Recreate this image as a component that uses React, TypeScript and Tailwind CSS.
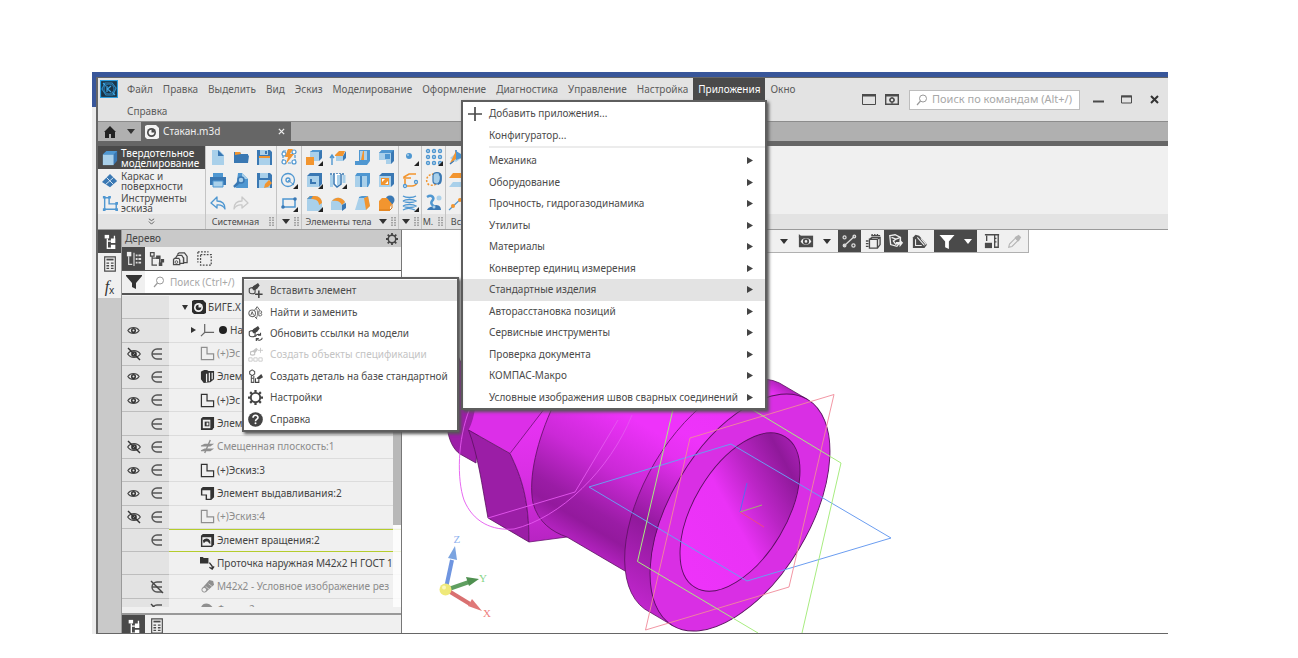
import React from "react";

type IconProps = { children: React.ReactNode; className?: string; box?: string };

function Icon({ children, className = "h-[18px] w-[18px]", box = "0 0 18 18" }: IconProps) {
  return (
    <svg viewBox={box} className={`shrink-0 ${className}`} fill="none" aria-hidden="true">
      {children}
    </svg>
  );
}

const L = "#a9d0ea";
const M = "#4f97d1";
const D = "#3a78b3";
const O = "#f2952f";
const G = "#4b4b4b";

const corner = <path d="M18 13v5h-5z" fill="#222" />;

const icons = {
  newFile: (
    <Icon>
      <path d="M3 2h7l5 5v10H3z" fill={L} />
      <path d="M9 2l6 6H9z" fill={D} />
    </Icon>
  ),
  open: (
    <Icon>
      <path d="M2 4h6l1 2h7v9H2z" fill={D} />
      <path d="M3 4h5l1 2-6 1z" fill={O} />
      <path d="M2 15L4 7.500h13L16 15z" fill={D} />
    </Icon>
  ),
  save: (
    <Icon>
      <path d="M2 2h13l2 2v13H2z" fill={D} />
      <path d="M5 2h8v5H5z" fill={L} />
      <path d="M10 3h2v3h-2z" fill={D} />
      <path d="M4 9h11v8H4z" fill={L} />
      <path d="M4 8h11v2H4z" fill={O} />
    </Icon>
  ),
  print: (
    <Icon>
      <path d="M4 2h10v4H4z" fill={M} />
      <path d="M1 6h16v8H1z" fill={D} />
      <path d="M4 10h10v6H4z" fill={L} stroke={M} />
    </Icon>
  ),
  preview: (
    <Icon>
      <path d="M6 2h4l6 6v9H4z" fill={M} />
      <path d="M10 2l6 6h-6z" fill={L} />
      <circle cx="9" cy="9" r="3" fill={L} stroke={D} strokeWidth="1.500" />
      <path d="M7 11l-5 5" stroke={D} strokeWidth="2.500" />
    </Icon>
  ),
  saveAs: (
    <Icon>
      <path d="M2 2h13l2 2v13H2z" fill={D} />
      <path d="M5 2h8v5H5z" fill={L} />
      <path d="M4 9h11v8H4z" fill={L} />
      <path d="M9 17l1-4 4-4 3 3-4 4z" fill={O} />
    </Icon>
  ),
  undo: (
    <Icon>
      <path d="M8 3L2 9l6 5v-3c4-.5 6 .5 8 4 0-5-3-8-8-8z" stroke={M} strokeWidth="1.300" strokeLinejoin="round" />
    </Icon>
  ),
  redo: (
    <Icon>
      <path d="M10 3l6 6-6 5v-3c-4-.5-6 .5-8 4 0-5 3-8 8-8z" stroke="#c9c9c9" strokeWidth="1.300" strokeLinejoin="round" />
    </Icon>
  ),
  rebuild: (
    <Icon>
      <path d="M3 3h6M3 3v11M8 15h7V5" stroke={M} strokeWidth="1.200" strokeDasharray="3 1" />
      <g fill="#fff" stroke={M} strokeWidth="1.200">
        <circle cx="4" cy="14" r="2" />
        <circle cx="14" cy="4" r="2" />
        <circle cx="14" cy="14" r="2" />
        <circle cx="4" cy="6" r="2" />
      </g>
      <path d="M8 1h5l-3 5h4l-8 10 2-7H5z" fill={O} />
    </Icon>
  ),
  circle: (
    <Icon>
      <circle cx="8" cy="9" r="6.500" stroke={M} strokeWidth="1.300" />
      <circle cx="8" cy="9" r="2" stroke={M} strokeWidth="1.300" />
      <path d="M8 9l6 5" stroke={M} />
      {corner}
    </Icon>
  ),
  rect: (
    <Icon>
      <path d="M3 5h12v8H3z" stroke={M} strokeWidth="1.500" />
      <g fill={D}>
        <circle cx="3" cy="13" r="1.800" />
        <circle cx="15" cy="5" r="1.800" />
      </g>
      {corner}
    </Icon>
  ),
  extrude: (
    <Icon>
      <path d="M5 4l3-2h9v8l-3 3H5z" fill={D} />
      <path d="M5 4h9v9H5z" fill={L} />
      <path d="M5 4l3-2h9l-3 2z" fill={M} />
      <path d="M1 9h8v8H1z" fill={O} />
      {corner}
    </Icon>
  ),
  push: (
    <Icon>
      <path d="M3 17V8M1 10l2-3 2 3" stroke={M} strokeWidth="1.400" />
      <path d="M6 7l4-4h6l-2 5H6z" fill={O} />
      <path d="M7 8h7v5H7z" fill={L} />
      <path d="M14 8l3-5v7l-3 3z" fill={D} />
    </Icon>
  ),
  rib: (
    <Icon>
      <path d="M6 2h11v10l-3 3H6z" fill={M} />
      <path d="M7 3h7v9H7z" fill={L} />
      <path d="M2 13h12l3-3v3l-3 4H2z" fill={M} />
      <path d="M10 3h1v9H8z" fill={O} />
    </Icon>
  ),
  cutBox: (
    <Icon>
      <path d="M2 5l3-3h12v11l-3 3h-4v-4H2z" fill={D} />
      <path d="M2 5h12v11H9v-4H2z" fill={L} />
      <path d="M5 2h12l-3 3H2z" fill={M} />
      <path d="M8 6h5v5H8z" fill={M} />
    </Icon>
  ),
  boxCut: (
    <Icon>
      <path d="M2 5l3-3h12v11l-3 3H2z" fill={D} />
      <path d="M2 5h12v11H2z" fill={L} />
      <path d="M5 8h6v5H5z" fill={D} />
      <path d="M7 8h4v3H7z" fill={L} />
      {corner}
    </Icon>
  ),
  hole: (
    <Icon>
      <path d="M1 3h15" stroke={D} strokeWidth="1.500" strokeDasharray="2 1" />
      <path d="M2.500 4v12M15 4v8" stroke={L} strokeWidth="3" />
      <path d="M5 3v10l3 3 4-3V3" stroke={D} strokeWidth="1.500" fill="#fff" />
      <path d="M8 4h3v9l-3 2z" fill={L} />
      {corner}
    </Icon>
  ),
  shell: (
    <Icon>
      <path d="M2 5l2-3h13v10l-2 4H2z" fill={M} />
      <path d="M2 5h5v11H2zM9 5h5v11H9z" fill={L} />
      <path d="M8 5v11" stroke={D} />
    </Icon>
  ),
  window: (
    <Icon>
      <path d="M2 5l3-3h12v11l-3 3H2z" fill={D} />
      <path d="M2 5h12v11H2z" fill={L} />
      <path d="M4 7h8v7H4z" fill={O} />
      <path d="M5 8h3l-3 3zM11 13H8l3-3z" fill="#fff" />
    </Icon>
  ),
  fillet: (
    <Icon>
      <path d="M2 5l3-3h5c4 0 7 3 7 7v5l-3 3H2z" fill={L} />
      <path d="M5 2h5c4 0 7 3 7 7l-3 2c0-4-3-6-8-6H2z" fill={O} />
      <path d="M2 5l3-3h3L6 5z" fill={M} />
      {corner}
    </Icon>
  ),
  round: (
    <Icon>
      <path d="M2 8c2-4 5-5 9-4 3 1 5 3 6 6v4l-3 2H2z" fill={L} />
      <path d="M3 7c3-4 9-5 13 1l-3 3c-2-4-5-5-10-4z" fill={O} />
      <path d="M13 11l4-2v5l-4 3z" fill={D} />
    </Icon>
  ),
  draft: (
    <Icon>
      <path d="M6 3l4-1h5l2 10-4 4H2z" fill={L} />
      <path d="M11 4l4-2 2 10-4 4z" fill={O} />
      <path d="M6 3l3-1h6l-4 2H6z" fill={M} />
    </Icon>
  ),
  union: (
    <Icon>
      <circle cx="13" cy="6" r="4.500" fill={D} />
      <path d="M2 7l3-3h5l5 6-2 3v4H2z" fill={O} />
      <path d="M2 16h11l2-2v-4" stroke="#d67a1a" />
    </Icon>
  ),
  point: (
    <Icon>
      <circle cx="8" cy="8" r="3" fill={M} />
      <circle cx="7" cy="7" r="1" fill={L} />
      {corner}
    </Icon>
  ),
  path3d: (
    <Icon>
      <path d="M15 3H8L3 6v1h7" stroke={O} strokeWidth="1.600" />
      <path d="M4 15V8M4 15h7c2 0 4-1 5-3" stroke={O} strokeWidth="1.600" />
      <g fill="#fff" stroke={M} strokeWidth="1.300">
        <circle cx="4" cy="15" r="1.500" />
        <circle cx="15" cy="11" r="1.500" />
      </g>
    </Icon>
  ),
  spiral: (
    <Icon>
      <g stroke={M} strokeWidth="1.300">
        <path d="M2 2c3 2 10 2 13 0M2 7c3-2 10-2 13 0-3 2-10 2-13 0M2 12c3-2 10-2 13 0-3 2-10 2-13 0M2 16c3-2 8-2 12 0" />
      </g>
      {corner}
    </Icon>
  ),
  array: (
    <Icon>
      <g stroke={M} strokeWidth="1.400">
        {[3, 9, 15].map((y) => [3, 9, 15].map((x) => <circle key={`${x}-${y}`} cx={x} cy={y} r="1.500" />))}
      </g>
      {corner}
    </Icon>
  ),
  mirror: (
    <Icon>
      <path d="M9 3c-9 0-9 10-4 11s8-2 8-3" stroke={O} strokeWidth="1.500" strokeDasharray="2 1.500" />
      <path d="M8 5c0-5 8-4 8 0v5c0 4-8 4-8 0z" fill={L} stroke={D} strokeWidth="1.200" />
      <path d="M14 3c3 1 2 9-1 10" stroke={D} strokeWidth="2" />
    </Icon>
  ),
  copyBody: (
    <Icon>
      <circle cx="14" cy="4" r="2.500" fill={L} />
      <path d="M2 3c5-3 8 1 5 4-2 3 1 5 4 6" stroke={M} strokeWidth="2.500" />
      <path d="M2 16c2-4 6-3 9-5 4 0 5 3 5 5z" fill={D} />
      <circle cx="9" cy="13" r="1.500" fill={L} />
    </Icon>
  ),
  axes: (
    <Icon>
      <path d="M8 2v9l-6 5M8 11l9-3" stroke={D} strokeWidth="1.500" />
      <path d="M2 10l6-5 8 3-8 6z" fill={L} />
      <path d="M8 3v8l-6 4z" fill={O} />
      <path d="M8 3l5 3v4l-5 2z" fill={M} />
    </Icon>
  ),
  planes: (
    <Icon>
      <path d="M5 2h12l-4 5H1z" fill={O} />
      <path d="M5 11h12l-4 5H1z" fill={L} />
    </Icon>
  ),
  axisLine: (
    <Icon>
      <path d="M1 16L16 2" stroke={M} strokeWidth="1.200" />
      <circle cx="5" cy="12" r="2" fill={O} />
      <circle cx="12" cy="6" r="2" fill={O} />
    </Icon>
  ),
};

type Tool = { name: string; icon: React.ReactNode };
type Section = { title: string; caret?: boolean; grip?: boolean; cols: string; width: string; tools: Tool[] };

const sections: Section[] = [
  {
    title: "Системная",
    grip: true,
    cols: "grid-cols-3",
    width: "w-[71px]",
    tools: [
      { name: "Создать", icon: icons.newFile },
      { name: "Открыть", icon: icons.open },
      { name: "Сохранить", icon: icons.save },
      { name: "Печать", icon: icons.print },
      { name: "Просмотр", icon: icons.preview },
      { name: "Сохранить как", icon: icons.saveAs },
      { name: "Отменить", icon: icons.undo },
      { name: "Повторить", icon: icons.redo },
    ],
  },
  {
    title: "",
    caret: true,
    grip: true,
    cols: "grid-cols-1",
    width: "w-[25px]",
    tools: [
      { name: "Перестроить", icon: icons.rebuild },
      { name: "Окружность", icon: icons.circle },
      { name: "Прямоугольник", icon: icons.rect },
    ],
  },
  {
    title: "Элементы тела",
    caret: true,
    grip: true,
    cols: "grid-cols-4",
    width: "w-[97px]",
    tools: [
      { name: "Элемент выдавливания", icon: icons.extrude },
      { name: "Придать толщину", icon: icons.push },
      { name: "Ребро жесткости", icon: icons.rib },
      { name: "Сечение", icon: icons.cutBox },
      { name: "Вырезать", icon: icons.boxCut },
      { name: "Отверстие", icon: icons.hole },
      { name: "Оболочка", icon: icons.shell },
      { name: "Масштаб", icon: icons.window },
      { name: "Скругление", icon: icons.fillet },
      { name: "Купол", icon: icons.round },
      { name: "Уклон", icon: icons.draft },
      { name: "Булева операция", icon: icons.union },
    ],
  },
  {
    title: "",
    caret: true,
    grip: true,
    cols: "grid-cols-1",
    width: "w-[23px]",
    tools: [
      { name: "Точка", icon: icons.point },
      { name: "Контур", icon: icons.path3d },
      { name: "Спираль", icon: icons.spiral },
    ],
  },
  {
    title: "М.",
    grip: true,
    cols: "grid-cols-1",
    width: "w-[24px]",
    tools: [
      { name: "Массив", icon: icons.array },
      { name: "Зеркальный массив", icon: icons.mirror },
      { name: "Копировать тела", icon: icons.copyBody },
    ],
  },
  {
    title: "Вс",
    cols: "grid-cols-1",
    width: "w-[23px]",
    tools: [
      { name: "Система координат", icon: icons.axes },
      { name: "Плоскость", icon: icons.planes },
      { name: "Ось", icon: icons.axisLine },
    ],
  },
];

function Caret({ className = "text-[#333]" }: { className?: string }) {
  return (
    <Icon box="0 0 8 5" className={`h-[5px] w-[8px] ${className}`}>
      <path d="M0 0h8L4 5z" fill="currentColor" />
    </Icon>
  );
}

function Grip() {
  return (
    <Icon box="0 0 5 9" className="h-[9px] w-[5px]">
      <path d="M1 0v9M4 0v9" stroke="#666" strokeWidth="1" strokeDasharray="1.500 1" />
    </Icon>
  );
}

function MagnifierIcon() {
  return (
    <Icon box="0 0 12 12" className="h-[12px] w-[12px]">
      <circle cx="7" cy="4.500" r="3.500" stroke="#999" />
      <path d="M4.500 7L1 11" stroke="#999" strokeWidth="1.200" />
    </Icon>
  );
}

const menuTitles = [
  "Файл", "Правка", "Выделить", "Вид", "Эскиз", "Моделирование", "Оформление",
  "Диагностика", "Управление", "Настройка", "Приложения", "Окно", "Справка",
];

function TitleBar() {
  return (
    <header className="flex h-[43px] bg-[#e3e3e3] text-[#5c5c5c]">
      <svg viewBox="0 0 18 18" className="mt-[2px] ml-[2px] h-[18px] w-[18px] shrink-0" aria-hidden="true">
        <rect width="18" height="18" fill="#1b3446" />
        <rect x=".5" y=".5" width="17" height="17" fill="none" stroke="#2e9fe0" strokeWidth="1.200" />
        <path d="M5 3l7 0 4 5-3 7-7 0L2 9z" fill="none" stroke="#2e8cc4" strokeWidth="1.200" />
        <path d="M7 6v6M11 6L7.500 9l3.500 3M3 3l3 3M15 15l-3-3" fill="none" stroke="#3fa8e6" strokeWidth="1.200" />
        <circle cx="9" cy="9" r="5" fill="none" stroke="#2e7fb4" />
      </svg>
      <nav className="mr-6 ml-[4px] flex min-w-0 flex-1 flex-wrap content-start">
        {menuTitles.map((t) => (
          <button
            key={t}
            type="button"
            className={
              t === "Приложения"
                ? "h-[22px] bg-[#4a4a4a] px-[5px] text-[10px] text-white"
                : "h-[22px] px-[5px] text-[10px]"
            }
          >
            {t}
          </button>
        ))}
      </nav>
      <div className="flex items-center">
        <button type="button" aria-label="Окна" className="w-[23px]">
          <Icon box="0 0 14 11" className="h-[11px] w-[14px]">
            <path d="M.5.5h13v10H.5z" stroke={G} />
            <path d="M0 0h14v2.500H0z" fill={G} />
          </Icon>
        </button>
        <button type="button" aria-label="Настройка экрана" className="w-[24px]">
          <Icon box="0 0 14 11" className="h-[11px] w-[14px]">
            <path d="M.7.7h12.600v9.600H.7z" stroke={G} strokeWidth="1.400" />
            <path d="M0 0h14v2.500H0z" fill={G} />
            <circle cx="7" cy="6" r="2" stroke={G} strokeWidth="1.500" />
            <path d="M7 3v1M7 8v2M4 6h1M9 6h1" stroke={G} />
          </Icon>
        </button>
        <label className="flex h-[20px] w-[171px] items-center gap-1 border border-[#bdbdbd] bg-white pl-1.5">
          <MagnifierIcon />
          <input
            type="text"
            aria-label="Поиск по командам"
            placeholder="Поиск по командам (Alt+/)"
            className="w-full min-w-0 bg-transparent text-[11px] outline-none placeholder:text-[#a8a8a8]"
          />
        </label>
        <div className="ml-[4px] flex items-center">
          <button type="button" aria-label="Свернуть" className="flex w-[28px] justify-center">
            <Icon box="0 0 11 11" className="h-[11px] w-[11px]">
              <path d="M0 7.500h11" stroke={G} strokeWidth="2" />
            </Icon>
          </button>
          <button type="button" aria-label="Развернуть" className="flex w-[28px] justify-center">
            <Icon box="0 0 11 11" className="h-[11px] w-[11px]">
              <path d="M.5 2h10v7H.5z" stroke={G} />
              <path d="M0 2.500h11" stroke={G} strokeWidth="2" />
            </Icon>
          </button>
          <button type="button" aria-label="Закрыть" className="flex w-[28px] justify-center">
            <Icon box="0 0 9 9" className="h-[9px] w-[9px]">
              <path d="M1 1l7 7M8 1L1 8" stroke="#333" strokeWidth="2" />
            </Icon>
          </button>
        </div>
      </div>
    </header>
  );
}

function DocIcon({ dark = false }: { dark?: boolean }) {
  return (
    <Icon box="0 0 16 16" className="h-[16px] w-[16px]">
      <path d="M1 2l2-1h9l3 3v10l-2 1H3l-2-2z" fill={dark ? "#2b2b2b" : "#f4f4f4"} />
      <circle cx="7.500" cy="8.500" r="4.500" fill={dark ? "#f4f4f4" : "#4b4b4b"} />
      <circle cx="7.500" cy="8.500" r="2.800" fill={dark ? "#2b2b2b" : "#f4f4f4"} />
      <path d="M7.500 8.500h3a3 3 0 0 0-3-3z" fill={dark ? "#f4f4f4" : "#4b4b4b"} />
    </Icon>
  );
}

function DocumentTabs() {
  return (
    <div className="border-t border-[#8c8c8c] border-b-[5px] border-b-[#666] bg-[#b0b0b0]">
      <div className="flex h-[19px] items-center">
        <button type="button" aria-label="Начальная страница" className="ml-[6px]">
          <Icon box="0 0 12 12" className="h-[12px] w-[12px]">
            <path d="M6 0l6 6h-1v6H7V8H5v4H1V6H0z" fill="#222" />
          </Icon>
        </button>
        <button type="button" aria-label="Список документов" className="mr-[6px] ml-[11px]">
          <Caret />
        </button>
        <div className="flex h-[19px] w-[150px] items-center bg-[#666] pl-[3px] text-[10px] text-[#f0f0f0]">
          <DocIcon />
          <span className="ml-[3px] flex-1">Стакан.m3d</span>
          <button type="button" aria-label="Закрыть документ" className="mr-[6px]">
            <Icon box="0 0 8 8" className="h-[7px] w-[7px]">
              <path d="M1 1l6 6M7 1L1 7" stroke="#eee" strokeWidth="1.500" />
            </Icon>
          </button>
        </div>
      </div>
    </div>
  );
}

function Ribbon() {
  return (
    <div className="flex h-[84px] border-b border-[#9a9a9a] bg-[#f0f0f0]">
      <div className="flex w-[107px] flex-col text-[10px] leading-[10px] text-[#4b4b4b]">
        <button type="button" className="flex h-[23px] items-center gap-[3px] bg-[#4a4a4a] pl-1 text-left text-white">
          <Icon className="h-[16px] w-[16px]">
            <path d="M1 5l4-4h12v11l-4 5H1z" fill={D} />
            <path d="M1 5h12v12H1z" fill={L} />
            <path d="M1 5l4-4h12l-4 4z" fill={M} />
          </Icon>
          <span>Твердотельное<br />моделирование</span>
        </button>
        <button type="button" className="flex h-[23px] items-center gap-[3px] pl-1 text-left">
          <Icon className="h-[16px] w-[16px]">
            <path d="M9 1l8 8-8 7-9-6z" fill={D} />
            <path d="M5 5l8 8M13 5l-9 8" stroke="#e6f1fa" strokeWidth="1" />
          </Icon>
          <span>Каркас и<br />поверхности</span>
        </button>
        <button type="button" className="flex h-[22px] items-center gap-[3px] pl-1 text-left">
          <Icon className="h-[16px] w-[16px]">
            <path d="M3 3h5v7h8v6H3z" stroke={M} strokeWidth="1.600" />
            <path d="M1 1h3v3H1zM7 1h3v3H7zM15 8h3v3h-3zM1 15h3v3H1zM15 15h3v3h-3z" fill={M} />
          </Icon>
          <span>Инструменты<br />эскиза</span>
        </button>
        <button type="button" aria-label="Ещё" className="flex flex-1 items-center justify-center bg-[#e3e3e3]">
          <Icon box="0 0 8 8" className="h-[7px] w-[7px]">
            <path d="M1 1l3 2 3-2M1 4l3 3 3-3" stroke="#555" />
          </Icon>
        </button>
      </div>
      {sections.map((s, i) => (
        <div key={i} className={`flex flex-col border-l border-[#c4c4c4] ${s.width}`}>
          <div className={`grid h-[68px] ${s.cols} grid-rows-3`}>
            {s.tools.map((t) => (
              <button key={t.name} type="button" aria-label={t.name} className="flex items-center justify-center">
                {t.icon}
              </button>
            ))}
          </div>
          <div className="flex flex-1 items-center justify-end gap-[4px] bg-[#e3e3e3] pr-[2px] text-[9px] whitespace-nowrap text-[#4b4b4b]">
            {s.title && <span className="flex-1 text-center">{s.title}</span>}
            {s.caret && <Caret />}
            {s.grip && <Grip />}
          </div>
        </div>
      ))}
      <div className="flex flex-1 flex-col justify-end border-l border-[#c4c4c4]">
        <div className="h-[15px] bg-[#e3e3e3]" />
      </div>
    </div>
  );
}

function Eye() {
  return (
    <Icon box="0 0 14 10" className="h-[9px] w-[13px]">
      <path d="M.7 5C3.500.5 10.500.5 13.300 5 10.500 9.500 3.500 9.500.7 5z" stroke="#444" strokeWidth="1.200" />
      <circle cx="7" cy="5" r="2" stroke="#333" strokeWidth="1.700" />
    </Icon>
  );
}

function EyeOff() {
  return (
    <Icon box="0 0 14 14" className="h-[14px] w-[14px]">
      <path d="M.7 7C3.500 2.500 10.500 2.500 13.300 7 10.500 11.500 3.500 11.500.7 7z" stroke="#444" strokeWidth="1.200" />
      <circle cx="7" cy="7" r="2" stroke="#333" strokeWidth="1.700" />
      <path d="M1 1l12 12" stroke="#333" strokeWidth="1.400" />
    </Icon>
  );
}

function Member({ struck = false }: { struck?: boolean }) {
  return (
    <Icon box="0 0 14 14" className="h-[14px] w-[14px]">
      <path d="M12 2H7a5 5 0 0 0 0 10h5M2.500 7H12" stroke="#555" strokeWidth="1.400" />
      {struck && <path d="M1 1l12 12" stroke="#444" strokeWidth="1.400" />}
    </Icon>
  );
}

type GlyphKind = "sketch" | "rev" | "cutout" | "plane" | "ext" | "rot" | "groove" | "thread" | "arc";

function TreeGlyph({ kind, dim = false }: { kind: GlyphKind; dim?: boolean }) {
  const c = dim ? "#8f8f8f" : "#333";
  return (
    <Icon box="0 0 16 16" className="h-[15px] w-[15px]">
      {kind === "sketch" && <path d="M1.500 1.500h6v7h7v6h-13z" stroke={c} strokeWidth="1.300" />}
      {kind === "rev" && (
        <>
          <path d="M1 3c3-3 7-2 8-1l6 0v9l-4 3-7 1-3-4z" fill={c} />
          <path d="M7 5v9M10 4v9M13 4v7" stroke="#eee" strokeWidth="1.300" />
        </>
      )}
      {kind === "cutout" && (
        <>
          <path d="M1 3l2-2h12v11l-2 3H1z" fill={c} />
          <path d="M3 4h8v9H3z" fill="#f0f0f0" />
          <path d="M5 6h5v5H5z" fill={c} />
          <path d="M7 7h2v3H7z" fill="#f0f0f0" />
        </>
      )}
      {kind === "plane" && (
        <>
          <path d="M1 7l4-2h10l-4 3H1zM1 12l4-2h10l-4 3H1z" fill={c} />
          <path d="M5 15L11 1" stroke={c} strokeWidth="1.500" />
        </>
      )}
      {kind === "ext" && (
        <>
          <path d="M1 3l2-2h12v11l-3 3H6v-5H1z" fill={c} />
          <path d="M2.500 4.500h8.500v9H7.500V9h-5z" fill="#f0f0f0" />
        </>
      )}
      {kind === "rot" && (
        <>
          <path d="M1 3l2-2h12v11l-2 3H1z" fill={c} />
          <path d="M2.500 4.500h9.500v9H2.500z" fill="#f0f0f0" />
          <path d="M3 8c2-3 7-3 8 1v3L8 9H6l-2 2z" fill={c} />
        </>
      )}
      {kind === "groove" && (
        <>
          <path d="M0 1h3l1 1h5v6H0z" fill={c} />
          <path d="M10 7l3 4v3M10 12l3 2 2-3" stroke={c} strokeWidth="1.400" />
        </>
      )}
      {kind === "thread" && (
        <>
          <path d="M2 10L10 1l4 1 1 4-9 8z" fill={c} />
          <path d="M6 8l4 3M9 5l4 3" stroke="#ddd" strokeWidth=".8" />
          <circle cx="4.500" cy="11.500" r="2.500" stroke={c} fill="#f0f0f0" />
        </>
      )}
      {kind === "arc" && <path d="M1 6c2-6 10-6 14 2l-4 1c-2-4-6-3-6 0z" fill={c} />}
    </Icon>
  );
}

type Row = {
  eye?: "on" | "off";
  member?: "on" | "struck";
  kind: GlyphKind;
  text: string;
  plus?: boolean;
  dim?: boolean;
  marked?: boolean;
};

const rows: Row[] = [
  { eye: "off", member: "on", kind: "sketch", text: "Эс", plus: true, dim: true },
  { eye: "on", member: "on", kind: "rev", text: "Элем" },
  { eye: "on", member: "on", kind: "sketch", text: "Эс", plus: true },
  { member: "on", kind: "cutout", text: "Элем" },
  { eye: "off", member: "on", kind: "plane", text: "Смещенная плоскость:1", dim: true },
  { eye: "on", member: "on", kind: "sketch", text: "Эскиз:3", plus: true },
  { eye: "on", member: "on", kind: "ext", text: "Элемент выдавливания:2" },
  { eye: "off", member: "on", kind: "sketch", text: "Эскиз:4", plus: true, dim: true },
  { member: "on", kind: "rot", text: "Элемент вращения:2", marked: true },
  { kind: "groove", text: "Проточка наружная М42х2 Н ГОСТ 1" },
  { member: "struck", kind: "thread", text: "М42х2 - Условное изображение рез", dim: true },
  { member: "struck", kind: "arc", text: "Фаска:2", dim: true },
];

function TreeRow({ left, children, marked = false }: { left?: React.ReactNode; children: React.ReactNode; marked?: boolean }) {
  return (
    <li className="flex min-h-0">
      <div className="flex w-[47px] shrink-0 items-center border-b border-[#bdbdbd] bg-[#e3e3e3]">{left}</div>
      <div
        className={
          marked
            ? "flex min-w-0 flex-1 items-center border-y border-[#b4cc2c] whitespace-nowrap"
            : "flex min-w-0 flex-1 items-center border-b border-[#dcdcdc] whitespace-nowrap"
        }
      >
        {children}
      </div>
    </li>
  );
}

function TreePanel() {
  return (
    <aside className="flex w-[280px] shrink-0 flex-col border-r border-[#777] bg-[#f0f0f0] text-[10px] text-[#444]">
      <div className="flex h-[17px] items-center justify-between bg-[#c9c9c9] pr-[3px] pl-[3px]">
        <h2>Дерево</h2>
        <button type="button" aria-label="Настройка панели">
          <Gear className="h-[12px] w-[12px]" />
        </button>
      </div>
      <div className="flex h-[24px] items-center border-b border-[#555]">
        <button type="button" aria-label="Структура" className="flex h-[23px] w-[23px] items-center justify-center bg-[#4a4a4a]">
          <Icon className="h-[16px] w-[16px]">
            <path d="M1 1h5v5H1z" fill="#eee" />
            <path d="M3 6v9h4M9 2v15" stroke="#ddd" strokeWidth="1.300" />
            <path d="M11 4h2v2h-2zM14 4h3v2h-3zM11 8h2v2h-2zM14 8h3v2h-3zM11 12h2v2h-2zM14 12h3v2h-3z" fill="#ddd" />
          </Icon>
        </button>
        <button type="button" aria-label="Последовательность" className="flex w-[23px] justify-center">
          <Icon className="h-[16px] w-[16px]">
            <path d="M1.700 1.700h4v4h-4z" stroke={G} strokeWidth="1.400" />
            <path d="M3.500 6v10H9M3.500 8H9M12 9v5h2" stroke={G} strokeWidth="1.400" />
            <path d="M8 5h5v4H8zM13 9h4v4h-4zM11 13h4v4h-4z" fill={G} />
          </Icon>
        </button>
        <button type="button" aria-label="Тела" className="flex w-[24px] justify-center">
          <Icon className="h-[16px] w-[16px]">
            <path d="M6 4l2-2h6l3 4v7h-4" stroke={G} strokeWidth="1.400" />
            <path d="M4 8l2-3h5l2 3v6H9" stroke={G} strokeWidth="1.400" />
            <path d="M1.700 9.700l1-1.500h5l1 2v5h-7z" stroke={G} strokeWidth="1.400" />
            <circle cx="5" cy="12.500" r="1.500" stroke={G} />
            <path d="M13 7v6" stroke={G} strokeWidth="1.400" />
          </Icon>
        </button>
        <button type="button" aria-label="Область" className="flex w-[25px] justify-center">
          <Icon className="h-[16px] w-[16px]">
            <path d="M4 4h12v12H4z" stroke={G} strokeWidth="1.400" strokeDasharray="2 1.500" />
            <path d="M1 1h12M1 1v12" stroke={G} strokeWidth="1.400" strokeDasharray="2 1.500" />
          </Icon>
        </button>
      </div>
      <div className="flex h-[24px] border-b-2 border-[#555]">
        <button type="button" aria-label="Фильтр" className="flex w-[23px] items-center justify-center">
          <Icon box="0 0 16 16" className="h-[16px] w-[16px]">
            <path d="M0 1h16v1l-6 7v6l-4-2V9L0 2z" fill="#333" />
          </Icon>
        </button>
        <label className="flex flex-1 items-center gap-[5px] bg-white pl-[8px]">
          <MagnifierIcon />
          <input
            type="text"
            aria-label="Поиск"
            placeholder="Поиск (Ctrl+/)"
            className="w-full min-w-0 bg-transparent text-[10px] outline-none placeholder:text-[#a8a8a8]"
          />
        </label>
      </div>
      <div className="relative min-h-0 flex-1 overflow-hidden pt-px">
        <ul className="grid h-[326px] auto-rows-fr">
          <TreeRow>
            <Icon box="0 0 6 5" className="ml-[13px] h-[5px] w-[6px]">
              <path d="M0 0h6L3 5z" fill="#333" />
            </Icon>
            <span className="mr-px ml-[3px]"><DocIcon dark /></span>
            БИГЕ.X
          </TreeRow>
          <TreeRow left={<span className="ml-[5px]"><Eye /></span>}>
            <Icon box="0 0 5 6" className="ml-[22px] h-[6px] w-[5px]">
              <path d="M0 0v6l5-3z" fill="#333" />
            </Icon>
            <Icon box="0 0 16 16" className="mr-1 ml-1 h-[15px] w-[15px]">
              <path d="M5 1v9l-4 4M5 10h10" stroke="#666" strokeWidth="1.300" />
            </Icon>
            <span className="mr-[3px] h-[8px] w-[8px] rounded-full bg-[#222]" />
            На
          </TreeRow>
          {rows.map((r, i) => (
            <TreeRow
              key={i}
              marked={r.marked}
              left={
                <>
                  <span className="ml-[5px] flex w-[23px]">
                    {r.eye === "on" && <Eye />}
                    {r.eye === "off" && <EyeOff />}
                  </span>
                  {r.member && <Member struck={r.member === "struck"} />}
                </>
              }
            >
              <span className={r.dim ? "flex items-center pl-[31px] text-[#8c8c8c]" : "flex items-center pl-[31px] text-[#444]"}>
                <TreeGlyph kind={r.kind} dim={r.dim} />
                <span className="ml-[2px]">{r.plus ? `(+)${r.text}` : r.text}</span>
              </span>
            </TreeRow>
          ))}
        </ul>
        <div className="absolute inset-y-0 right-0 w-[8px] bg-white/80">
          <div className="h-[230px] bg-[#b8b8b8]" />
        </div>
      </div>
      <div className="mt-[6px] flex h-[20px] overflow-hidden border-t-2 border-[#999]">
        <button type="button" aria-label="Дерево" className="flex w-[23px] justify-center bg-[#4a4a4a] pt-[4px]">
          <TreeTabIcon className="h-[16px] w-[16px] text-white" />
        </button>
        <button type="button" aria-label="Параметры" className="flex w-[23px] justify-center pt-[3px]">
          <ParamsIcon />
        </button>
      </div>
    </aside>
  );
}

function TreeTabIcon({ className }: { className: string }) {
  return (
    <Icon className={className}>
      <path d="M3 1h5v4H3z" fill="currentColor" />
      <path d="M6 5v11h4M6 8h4M14 2v4" stroke="currentColor" strokeWidth="1.500" />
      <path d="M10 5h5v5h-5zM10 12h5v5h-5z" fill="currentColor" />
    </Icon>
  );
}

function ParamsIcon() {
  return (
    <Icon className="h-[16px] w-[16px]">
      <path d="M3 1h12v16H3z" stroke={G} strokeWidth="1.300" />
      <path d="M5 4h8" stroke={G} strokeWidth="2" />
      <path d="M5 8h3M5 11h3M5 14h3M10 8h3M10 11h3M10 14h3" stroke={G} strokeWidth="1.500" />
    </Icon>
  );
}

function Gear({ className }: { className: string }) {
  return (
    <Icon box="0 0 16 16" className={className}>
      <circle cx="8" cy="8" r="5" stroke="#444" strokeWidth="2" />
      <path
        d="M8 0v3M8 13v3M0 8h3M13 8h3M2.300 2.300l2.200 2.200M11.500 11.500l2.200 2.200M2.300 13.700l2.200-2.200M11.500 4.500l2.200-2.200"
        stroke="#444"
        strokeWidth="2.400"
      />
    </Icon>
  );
}

function SideStrip() {
  return (
    <div className="w-[24px] shrink-0 border-r border-[#9a9a9a] bg-[#c9c9c9]">
      <button type="button" aria-label="Дерево документа" className="flex h-[23px] w-full items-center justify-center bg-[#4a4a4a]">
        <TreeTabIcon className="h-[16px] w-[16px] text-white" />
      </button>
      <button type="button" aria-label="Панель параметров" className="flex h-[22px] w-full items-center justify-center bg-[#f0f0f0]">
        <ParamsIcon />
      </button>
      <button type="button" aria-label="Переменные" className="flex h-[23px] w-full items-center justify-center bg-[#f0f0f0] font-['Liberation_Serif',serif] text-[16px] leading-none text-[#333] italic">
        f<span className="mt-[6px] font-['Noto_Sans',sans-serif] text-[10px] not-italic">x</span>
      </button>
    </div>
  );
}

function Model() {
  return (
    <svg viewBox="402 230 766 403" className="absolute top-0 left-0 h-[403px] w-[766px]" fill="none" aria-label="Модель">
      <defs>
        <linearGradient id="body" gradientUnits="userSpaceOnUse" x1="600" y1="556" x2="669" y2="440">
          <stop offset="0" stopColor="#b122bd" />
          <stop offset=".15" stopColor="#93199d" />
          <stop offset=".27" stopColor="#9a1ca5" />
          <stop offset=".6" stopColor="#cb29d7" />
          <stop offset="1" stopColor="#ee33fa" />
        </linearGradient>
        <linearGradient id="flange" gradientUnits="userSpaceOnUse" x1="647" y1="610" x2="781" y2="384">
          <stop offset="0" stopColor="#c026cc" />
          <stop offset=".28" stopColor="#91199c" />
          <stop offset=".55" stopColor="#e530f0" />
          <stop offset=".65" stopColor="#ee33fa" />
          <stop offset=".95" stopColor="#e932f5" />
          <stop offset="1" stopColor="#b022bb" />
        </linearGradient>
        <linearGradient id="bore" gradientUnits="userSpaceOnUse" x1="695" y1="587" x2="785" y2="437">
          <stop offset="0" stopColor="#ee33fa" />
          <stop offset=".45" stopColor="#ea32f6" />
          <stop offset=".65" stopColor="#bb25c6" />
          <stop offset=".86" stopColor="#8f199a" />
          <stop offset="1" stopColor="#b122bd" />
        </linearGradient>
        <linearGradient id="chamfer" gradientUnits="userSpaceOnUse" x1="540" y1="410" x2="545" y2="540">
          <stop offset="0" stopColor="#ea33f6" />
          <stop offset=".5" stopColor="#d92fe4" />
          <stop offset="1" stopColor="#b824c3" />
        </linearGradient>
      </defs>

      <path d="M458 356L447 425C448 440 454 450 460 454L476 463 480 405z" fill="#9d1ea8" stroke="#5a1060" strokeWidth=".8" />
      <path d="M476 404C474 415 472 424 468.500 430L510 453.500 560 400z" fill="#dc2fe8" />
      <path d="M468.500 430L510 453.500C522 478 529 500 529 542L488 518C482 485 478 455 468.500 430z" fill="#9b1ea6" stroke="#5a1060" strokeWidth=".8" />
      <path d="M548 404L510 453.500C522 478 529 500 529 542L567 537 600 520 590 400z" fill="url(#chamfer)" stroke="#6a1272" strokeWidth=".8" />
      <path d="M554 404C537 440 528 478 533 503 538 522 552 532 567 537L625 571 700 560 760 400z" fill="url(#body)" stroke="#5a1060" strokeWidth=".8" />
      <path
        d="M644.600 609A69.300 131.700 30.800 0 1 779.400 383L807.400 399.400 672.600 625.600z"
        fill="url(#flange)"
        stroke="#5a1060"
        strokeWidth=".8"
      />
      <ellipse cx="740" cy="512.500" rx="69.300" ry="131.700" transform="rotate(30.800 740 512.500)" fill="#d92fe4" stroke="#5a1060" strokeWidth=".9" />
      <ellipse cx="740" cy="512" rx="46.200" ry="87.800" transform="rotate(30.800 740 512)" fill="url(#bore)" stroke="#5a1060" strokeWidth=".9" />

      <g stroke="#e458ef" strokeWidth=".9">
        <path d="M470 408C457 440 457 480 464 500 473 522 492 531 514 529 560 518 610 470 632 415" />
        <path d="M488 518L575 492 618 420" />
      </g>
      <path d="M589 487L731 444 891 538 747 581z" stroke="#6b9df0" />
      <path d="M690 438L834 394.500 789 587 645.500 630z" stroke="#f08a9a" strokeWidth=".9" />
      <path d="M674 405L637.500 561.500 758 633M748 407L841 463 802 633" stroke="#a8ec80" />
      <path d="M740 512L747 483" stroke="#5a6af0" />
      <path d="M740 512L762 505" stroke="#a0b070" />
      <path d="M740 512L764 527" stroke="#f04a80" />

      <path d="M446 588L452 560" stroke="#6f95e0" strokeWidth="4" />
      <path d="M455 546L448 558 457 560z" fill="#7ba4e0" />
      <path d="M446 590L469 582" stroke="#5f9f60" strokeWidth="4" />
      <path d="M479 579L466 577 469 586z" fill="#4f9050" />
      <path d="M447 590L470 604" stroke="#d97070" strokeWidth="4" />
      <path d="M482 611L472 599 468 606z" fill="#e07878" />
      <circle cx="445.500" cy="589.500" r="6" fill="#efe97a" />
      <circle cx="444" cy="587.500" r="2" fill="#fbf8c0" />
      <g fontSize="11" fontFamily="Liberation Serif, serif">
        <text x="453.500" y="543" fill="#8fb2ee">Z</text>
        <text x="479" y="582" fill="#86d488">Y</text>
        <text x="483" y="617" fill="#ef8080">X</text>
      </g>
    </svg>
  );
}

function ViewToolbar() {
  const cell = "flex h-full w-[24px] items-center justify-center";
  const dark = "flex h-full w-[24px] items-center justify-center bg-[#4a4a4a]";
  return (
    <div className="relative ml-[358px] flex h-[23px] w-[269px] items-center border-r border-b border-[#b0b0b0] bg-[#f0f0f0]">
      <button type="button" aria-label="Ориентация" className="ml-[20px] flex h-full w-[14px] items-center"><Caret /></button>
      <button type="button" aria-label="Отображение" className="flex h-full w-[26px] items-center justify-center">
        <Icon className="h-[16px] w-[16px]">
          <path d="M1 3h16v13H1z" fill={G} />
          <path d="M1 1l4 4H1z" fill={G} />
          <path d="M3 9.500c3-5 9-5 12 0-3 5-9 5-12 0z" fill="#f0f0f0" />
          <circle cx="9" cy="9.500" r="2.500" fill="#f0f0f0" stroke={G} strokeWidth="2" />
        </Icon>
      </button>
      <button type="button" aria-label="Вариант отображения" className="flex h-full w-[17px] items-center justify-center"><Caret /></button>
      <button type="button" aria-label="Привязки" className={`ml-[2px] ${dark}`}>
        <Icon className="h-[16px] w-[16px]">
          <path d="M3 15L15 4" stroke="#ddd" strokeWidth="1.500" />
          <g stroke="#ddd" strokeWidth="1.400">
            <circle cx="4" cy="5" r="1.700" /><circle cx="15" cy="4" r="1.500" /><circle cx="4" cy="14" r="1.500" /><circle cx="14" cy="14" r="1.800" />
          </g>
        </Icon>
      </button>
      <button type="button" aria-label="Упрощения" className={cell}>
        <Icon className="h-[16px] w-[16px]">
          <path d="M5 7h9v10H5zM5 7l3-2h9v8l-3 4M14 7l3-2" stroke={G} strokeWidth="1.500" />
          <path d="M8 1v2M11 1v2M14 1v2M7 3h10M1 9h3M1 12h3M1 15h3" stroke={G} strokeWidth="1.500" />
        </Icon>
      </button>
      <button type="button" aria-label="Сечение модели" className={dark}>
        <Icon className="h-[16px] w-[16px]">
          <path d="M2 3l6-1 6 3v5l-4 5-7-2z" stroke="#eee" strokeWidth="1.500" />
          <path d="M4 5l5 2-3 2 3 4M9 7l5-2" stroke="#eee" strokeWidth="1.500" />
          <path d="M9 10h4V7l4 4-4 5v-3H9z" fill="#eee" />
        </Icon>
      </button>
      <button type="button" aria-label="Зона" className={cell}>
        <Icon className="h-[16px] w-[16px]">
          <path d="M1 5l3-3 4 1 9 10-3 4H1z" fill={G} />
          <path d="M4 7v7h7M6 5l8 9M10 6l6 7" stroke="#eee" strokeWidth="1.200" />
        </Icon>
      </button>
      <button type="button" aria-label="Фильтры" className="ml-[3px] flex h-full w-[44px] items-center justify-center gap-[9px] bg-[#4a4a4a]">
        <Icon box="0 0 16 16" className="h-[15px] w-[16px]">
          <path d="M0 1h16l-6 7v8l-4-2V8z" fill="#fff" />
        </Icon>
        <Caret className="text-white" />
      </button>
      <button type="button" aria-label="Измерить" className="flex h-full w-[30px] items-center justify-center">
        <Icon className="h-[16px] w-[16px]">
          <path d="M1 2h16M3 3v6M12 2v15M16 2v15M12 16h4M12 6h2M12 10h2" stroke={G} strokeWidth="1.500" />
          <path d="M1 11h8v6H1z" fill={G} />
        </Icon>
      </button>
      <button type="button" aria-label="Пипетка" className="flex h-full w-[22px] items-center">
        <Icon className="h-[15px] w-[15px]">
          <path d="M2 16l1-4 7-7 3 3-7 7z" stroke="#b5b5b5" strokeWidth="1.300" />
          <path d="M9 4l5-3 3 3-3 5z" fill="#b5b5b5" />
        </Icon>
      </button>
    </div>
  );
}

const appItems = [
  "Механика", "Оборудование", "Прочность, гидрогазодинамика", "Утилиты", "Материалы",
  "Конвертер единиц измерения", "Стандартные изделия", "Авторасстановка позиций",
  "Сервисные инструменты", "Проверка документа", "КОМПАС-Макро",
  "Условные изображения швов сварных соединений",
];

function AppsMenu() {
  return (
    <div
      role="menu"
      className="absolute top-[28px] left-[369px] flex h-[310px] w-[306px] flex-col border-2 border-[#5e5e5e] bg-white pt-px text-[10px] whitespace-nowrap text-[#4b4b4b] shadow-[2px_2px_3px_#555]"
    >
      <button role="menuitem" type="button" className="flex flex-1 items-center text-left">
        <Icon box="0 0 14 14" className="ml-[5px] h-[14px] w-[14px]">
          <path d="M7 0v14M0 7h14" stroke={G} strokeWidth="1.700" />
        </Icon>
        <span className="ml-[7px]">Добавить приложения...</span>
      </button>
      <button role="menuitem" type="button" className="flex-1 pl-[26px] text-left">Конфигуратор...</button>
      <div className="mb-[2px] ml-[26px] h-[2px] bg-[#ececec]" />
      {appItems.map((t) => (
        <button
          key={t}
          role="menuitem"
          type="button"
          className={
            t === "Стандартные изделия"
              ? "flex flex-1 items-center justify-between bg-[#e3e3e3] pr-[12px] pl-[26px]"
              : "flex flex-1 items-center justify-between pr-[12px] pl-[26px]"
          }
        >
          <span>{t}</span>
          <Icon box="0 0 6 7" className="h-[7px] w-[6px]">
            <path d="M0 0v7l6-3.500z" fill="#444" />
          </Icon>
        </button>
      ))}
    </div>
  );
}

const bolt = (c: string) => (
  <>
    <path d="M1.500 7c1-2 7-2 7 0v4c0 2-6 3-7 0z" stroke={c} strokeWidth="1.300" />
    <path d="M5 7l1-3 6-4 2 3-3 4-4 2z" fill={c} />
  </>
);

const subItems: { text: string; dim?: boolean; icon: React.ReactNode }[] = [
  { text: "Вставить элемент", icon: <>{bolt("#444")}<path d="M13 9v9M8.500 13.500h9" stroke="#444" strokeWidth="1.800" /></> },
  {
    text: "Найти и заменить",
    icon: (
      <>
        <circle cx="5" cy="10" r="4" stroke="#666" strokeWidth="1.300" />
        <path d="M3.500 12L5 8l1.500 4M8 6l3-4 3 4M8 14l3 3M13 7v6h2c2 0 2-3 0-3 2 0 2-3 0-3z" stroke="#666" strokeWidth="1.200" />
        <path d="M10 4c2 3 2 8 0 12" stroke="#666" />
      </>
    ),
  },
  {
    text: "Обновить ссылки на модели",
    icon: <>{bolt("#444")}<path d="M9 13c0-3 4-4 6-2M17 14c0 3-4 4-6 2M15 8v3h-3M10 18v-3h3" stroke="#444" strokeWidth="1.400" /></>,
  },
  {
    text: "Создать объекты спецификации",
    dim: true,
    icon: (
      <>
        <path d="M3 6c1-1 4-1 5 0v3c-1 1-4 1-5 0z" stroke="#c4c4c4" strokeWidth="1.300" />
        <path d="M5 5l5-4 2 2-3 4z" fill="#c4c4c4" />
        <path d="M15 1v6M12 4h6M1 13h4v4H1zM7 13h4v4H7zM13 13h4v4h-4z" stroke="#c4c4c4" />
      </>
    ),
  },
  {
    text: "Создать деталь на базе стандартной",
    icon: (
      <>
        <path d="M2 3l3-2 3 2v3L5 8 2 6zM4 8v8h3V8M4 11h3" stroke="#555" strokeWidth="1.300" />
        <path d="M10 11l6-5 2 4-5 3z" fill="#444" />
        <path d="M9 11v5h4v-3" stroke="#444" strokeWidth="1.300" />
      </>
    ),
  },
  { text: "Настройки", icon: null },
  {
    text: "Справка",
    icon: (
      <>
        <circle cx="9" cy="9" r="8.800" fill="#444" />
        <path d="M6 7c0-4 6-4 6-.5 0 2-3 2-3 4.500" stroke="#fff" strokeWidth="1.900" />
        <circle cx="9" cy="13.500" r="1.200" fill="#fff" />
      </>
    ),
  },
];

function StandardPartsMenu() {
  return (
    <div
      role="menu"
      className="absolute top-[205px] left-[150px] flex h-[155px] w-[217px] flex-col border-2 border-[#5e5e5e] bg-white pt-px text-[10px] whitespace-nowrap text-[#4b4b4b] shadow-[2px_2px_3px_#555]"
    >
      {subItems.map((s, i) => (
        <button
          key={s.text}
          role="menuitem"
          type="button"
          disabled={s.dim}
          className={
            i === 0
              ? "flex flex-1 items-center gap-[7px] bg-[#e3e3e3] pl-[4px]"
              : s.dim
                ? "flex flex-1 items-center gap-[7px] pl-[4px] text-[#c4c4c4]"
                : "flex flex-1 items-center gap-[7px] pl-[4px]"
          }
        >
          {s.icon ? <Icon className="h-[15px] w-[15px]">{s.icon}</Icon> : <Gear className="h-[15px] w-[15px]" />}
          <span>{s.text}</span>
        </button>
      ))}
    </div>
  );
}

export default function App() {
  return (
    <main className="flex h-screen min-h-[500px] flex-col bg-white pt-[72px] pr-[130px] pb-[24px] pl-[92px] font-['Noto_Sans','Open_Sans',sans-serif]">
      <div className="relative flex min-h-0 flex-1 flex-col">
        <div className="h-[5px] shrink-0 bg-[#38569a]" />
        <div className="flex min-h-0 flex-1">
          <div className="w-[4px] shrink-0 bg-[#ededed]">
            <div className="h-[30px] bg-[#38569a]" />
          </div>
          <div className="flex min-w-0 flex-1 flex-col border-t border-b border-l-2 border-[#666]">
            <TitleBar />
            <DocumentTabs />
            <Ribbon />
            <div className="flex min-h-0 flex-1">
              <SideStrip />
              <TreePanel />
              <div className="relative min-w-0 flex-1 overflow-hidden bg-white">
                <Model />
                <ViewToolbar />
              </div>
            </div>
          </div>
        </div>
        <AppsMenu />
        <StandardPartsMenu />
      </div>
    </main>
  );
}
